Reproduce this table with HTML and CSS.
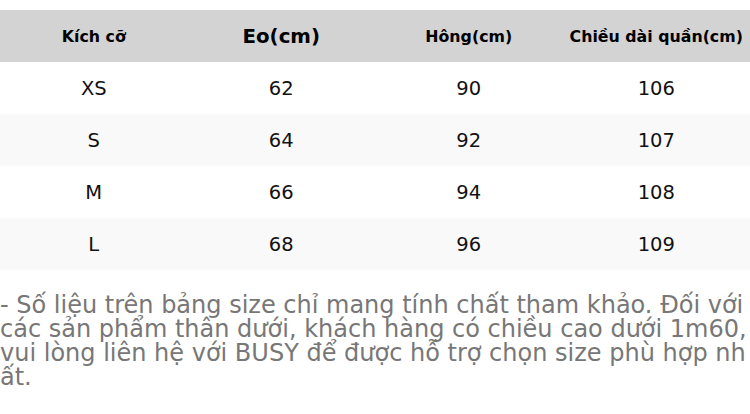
FILE: index.html
```html
<!DOCTYPE html>
<html lang="vi">
<head>
<meta charset="utf-8">
<title>Bảng size</title>
<link rel="stylesheet" href="styles.css">
</head>
<body>
<div class="page">
  <table class="size-table">
    <thead>
      <tr>
        <th>Kích cỡ</th>
        <th class="big">Eo(cm)</th>
        <th>Hông(cm)</th>
        <th>Chiều dài quần(cm)</th>
      </tr>
    </thead>
    <tbody>
      <tr><td>XS</td><td>62</td><td>90</td><td>106</td></tr>
      <tr><td>S</td><td>64</td><td>92</td><td>107</td></tr>
      <tr><td>M</td><td>66</td><td>94</td><td>108</td></tr>
      <tr><td>L</td><td>68</td><td>96</td><td>109</td></tr>
    </tbody>
  </table>
  <p class="note">- Số liệu trên bảng size chỉ mang tính chất tham khảo. Đối với các sản phẩm thân dưới, khách hàng có chiều cao dưới 1m60, vui lòng liên hệ với BUSY để được hỗ trợ chọn size phù hợp nhất.</p>
</div>
</body>
</html>
```
FILE: styles.css
```css
html, body {
  margin: 0;
  padding: 0;
  background: #ffffff;
}
.page {
  width: 750px;
  padding-top: 10px;
  font-family: "DejaVu Sans", sans-serif;
}
.size-table {
  width: 100%;
  border-collapse: collapse;
  table-layout: fixed;
}
.size-table th {
  height: 52px;
  padding: 0;
  background: #d3d3d3;
  color: #000;
  font-weight: bold;
  font-size: 15.8px;
  text-align: center;
  vertical-align: middle;
}
.size-table th.big {
  font-size: 19.8px;
}
.size-table td {
  height: 52px;
  padding: 0;
  text-align: center;
  vertical-align: middle;
  font-size: 19.5px;
  color: #111;
}
.size-table tbody tr:nth-child(even) td {
  background: #f9f9f9;
}
.note {
  margin: 23px 0 0;
  font-size: 24px;
  line-height: 24px;
  color: #777777;
  word-break: break-all;
}
```
